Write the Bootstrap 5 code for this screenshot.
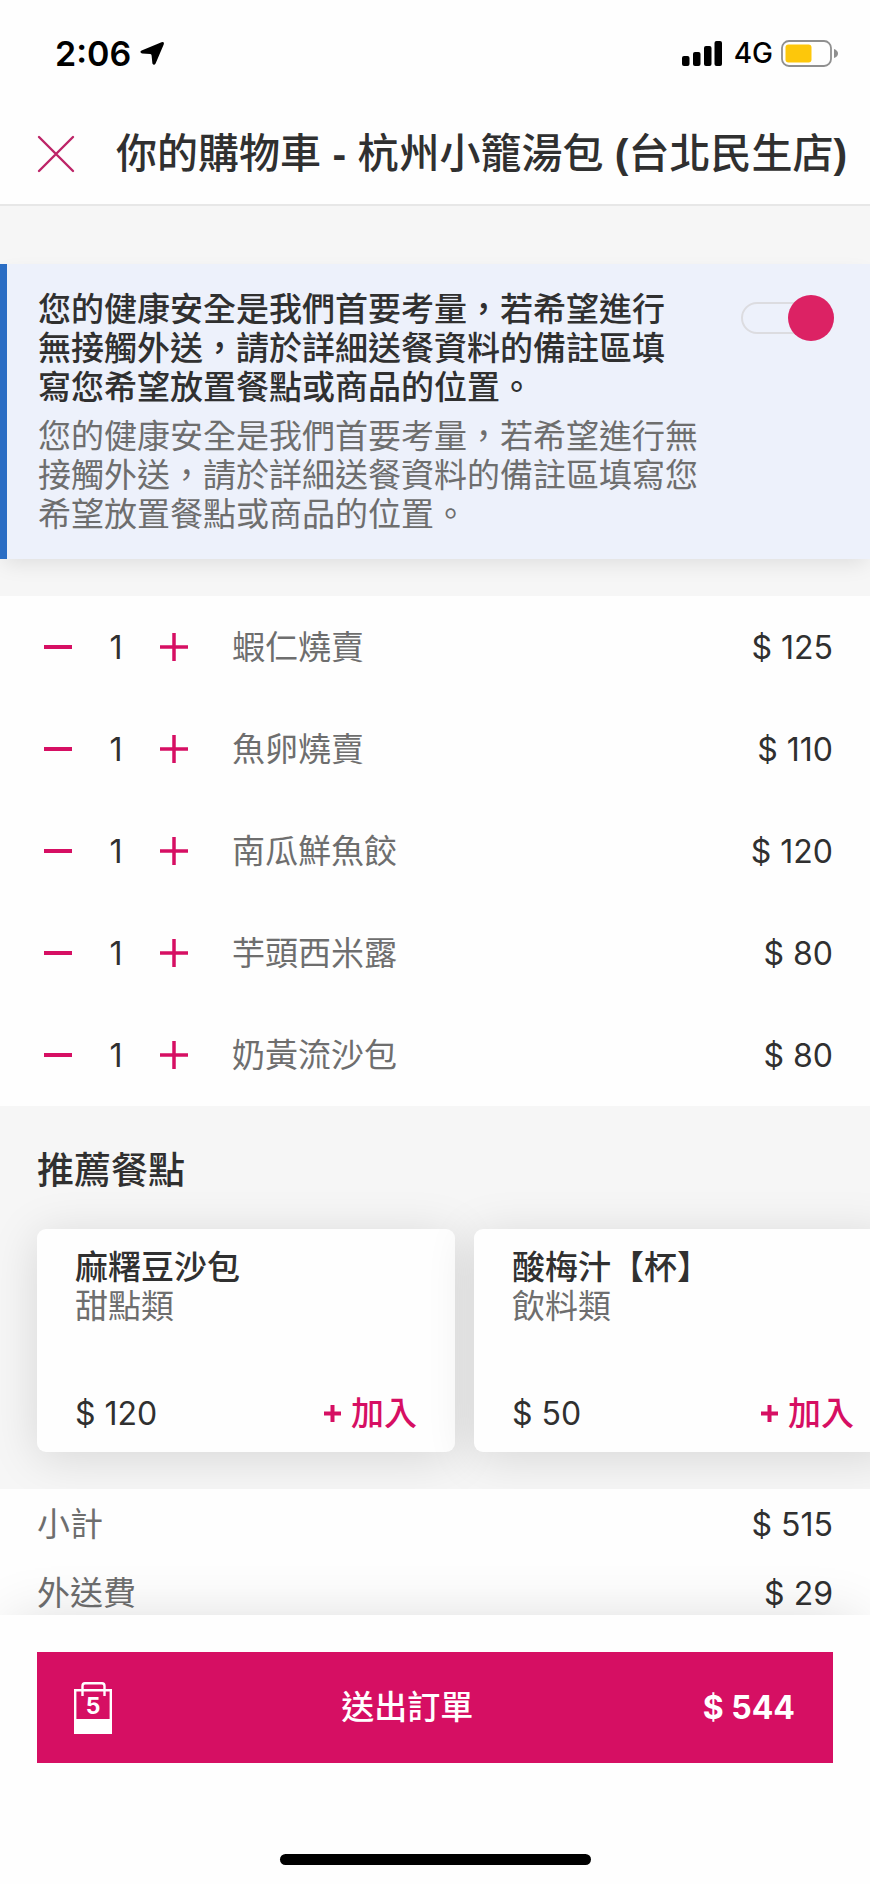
<!DOCTYPE html>
<html lang="zh-Hant">
<head>
<meta charset="utf-8">
<meta name="viewport" content="width=device-width, initial-scale=1">
<title>你的購物車</title>
<link href="https://cdn.jsdelivr.net/npm/bootstrap@5.3.0/dist/css/bootstrap.min.css" rel="stylesheet">
<style>
  :root { --pink: #d60f63; --ink: #303030; --soft: #6e6e6e; --paper: #fefefe; --edge: 37px; }
  body { font-family: Inter, "Noto Sans CJK TC", sans-serif; font-size: 33px; line-height: 39px; color: var(--ink); background: #f6f6f6; }
  .edge-x { padding-left: var(--edge); padding-right: var(--edge); }
  .paper { background: var(--paper); }
  .soft { color: var(--soft); }
  .amount { font-size: 32px; }
  .medium { font-weight: 500; }

  .status-bar { height: 107px; padding: 0 31px 0 55px; color: #000; }
  .clock { font-size: 34px; font-weight: 600; }
  .network { font-size: 28px; font-weight: 500; }
  .title-bar { height: 99px; padding-bottom: 4px; border-bottom: 2px solid #e7e7e7; }
  .title-bar h1 { font-size: 41px; line-height: 49px; }
  .title-bar b { font-family: "Liberation Sans", sans-serif; }
  .close-btn { margin-right: 41px; }

  .notice { margin: 58px 0 37px; padding: 26px 36px 25px 31px; background: #edf1fb; border-left: 7px solid #2a6dc4; box-shadow: 0 8px 20px -4px rgba(0,0,0,.1); }
  .notice label { max-width: 650px; margin-bottom: 10px; }
  .notice p { max-width: 680px; }
  .toggle { appearance: none; display: grid; align-items: center; flex: none; width: 93px; height: 46px; margin: 5px 0 0; }
  .toggle::before, .toggle::after { content: ""; grid-area: 1 / 1; }
  .toggle::before { height: 32px; border: 2px solid #dcdce0; border-radius: 16px; }
  .toggle::after { width: 46px; height: 46px; border-radius: 50%; background: #dc2264; }
  .toggle:checked::after { justify-self: end; }

  .cart-row { min-height: 102px; padding-left: 44px; }
  .count { width: 88px; text-align: center; }
  .step-btn { color: var(--pink); }
  .dish { margin-left: 44px; }

  .suggest { padding: 42px 0 37px; }
  .suggest h2 { font-size: 37px; line-height: 45px; margin-bottom: 36px; }
  .strip { gap: 19px; }
  .dish-card { flex: 0 0 418px; min-height: 223px; padding: 19px 38px; border-radius: 9px; background: var(--paper); box-shadow: 0 6px 48px rgba(0,0,0,.13); }
  .dish-card h3 { font-size: 33px; line-height: 39px; }
  .add-btn { color: var(--pink); font-size: 33px; line-height: 39px; font-weight: 500; }
  .add-btn svg { margin-right: 10px; }

  .totals { padding-top: 16px; padding-bottom: 2px; gap: 30px; }
  .checkout { padding-top: 37px; padding-bottom: 19px; z-index: 1; box-shadow: 0 -4px 56px -12px rgba(0,0,0,.16); }
  .order-btn { min-height: 111px; padding: 0 38px 0 37px; background: var(--pink); color: #fff; font-size: 33px; line-height: 39px; }
  .home-bar { width: 311px; height: 11px; border-radius: 6px; background: #000; margin-top: 91px; }
</style>
</head>
<body class="min-vh-100 d-flex flex-column">

<header class="paper">
  <div class="status-bar d-flex align-items-center">
    <span class="clock">2:06</span>
    <svg class="ms-2" width="26" height="26" viewBox="0 0 26 26" aria-hidden="true"><path d="M22.500 1.200Q25.600 .400 24.700 3.500L16.600 22.400Q15 25 13.400 22.400L12.600 14.400Q12.500 13.200 11.300 13L3 12.400Q0 11.300 2.600 9.600Z"/></svg>
    <div class="ms-auto d-flex align-items-center">
      <svg width="40" height="26" viewBox="0 0 40 26" aria-hidden="true"><rect y="15" width="7.500" height="10" rx="2"/><rect x="11" y="11" width="7.500" height="14" rx="2"/><rect x="22" y="5" width="7.500" height="20" rx="2"/><rect x="32.500" width="7.500" height="25" rx="2"/></svg>
      <span class="network ms-2 me-2 ps-1">4G</span>
      <svg width="58" height="27" viewBox="0 0 58 27" aria-hidden="true"><rect x="1" y="1" width="49" height="25" rx="7" fill="none" stroke="#8f8f8f" stroke-width="1.800"/><rect x="4.500" y="4.500" width="26" height="18" rx="3" fill="#fdc70b"/><path d="M53 9q4 1.500 4 4.500t-4 4.500z" fill="#8f8f8f"/></svg>
    </div>
  </div>
  <div class="title-bar edge-x pe-0 d-flex align-items-center">
    <button type="button" class="close-btn btn p-0 border-0 d-flex" aria-label="關閉">
      <svg width="38" height="38" viewBox="0 0 38 38" fill="none" stroke="#bd2467" stroke-width="2.400" stroke-linecap="round"><path d="M2 2 36 36M36 2 2 36"/></svg>
    </button>
    <h1 class="m-0 medium text-nowrap">你的購物車<b> - </b>杭州小籠湯包<b> (</b>台北民生店<b>)</b></h1>
  </div>
</header>

<main>
  <section class="notice d-flex justify-content-between align-items-start">
    <div>
      <label class="medium d-block" for="contactless">您的健康安全是我們首要考量，若希望進行無接觸外送，請於詳細送餐資料的備註區填寫您希望放置餐點或商品的位置。</label>
      <p class="soft m-0">您的健康安全是我們首要考量，若希望進行無接觸外送，請於詳細送餐資料的備註區填寫您希望放置餐點或商品的位置。</p>
    </div>
    <input class="toggle" type="checkbox" role="switch" id="contactless" checked>
  </section>

  <ul class="paper list-unstyled m-0">
    <li class="cart-row d-flex align-items-center">
      <button type="button" class="step-btn btn p-0 border-0 d-flex" aria-label="減少"><svg width="28" height="28" viewBox="0 0 28 28" stroke="currentColor" stroke-width="4"><path d="M0 14H28"/></svg></button>
      <span class="count amount">1</span>
      <button type="button" class="step-btn btn p-0 border-0 d-flex" aria-label="增加"><svg width="28" height="28" viewBox="0 0 28 28" stroke="currentColor" stroke-width="3.500"><path d="M0 14H28M14 0V28"/></svg></button>
      <span class="dish soft">蝦仁燒賣</span><span class="amount ms-auto edge-x">$ 125</span>
    </li>
    <li class="cart-row d-flex align-items-center">
      <button type="button" class="step-btn btn p-0 border-0 d-flex" aria-label="減少"><svg width="28" height="28" viewBox="0 0 28 28" stroke="currentColor" stroke-width="4"><path d="M0 14H28"/></svg></button>
      <span class="count amount">1</span>
      <button type="button" class="step-btn btn p-0 border-0 d-flex" aria-label="增加"><svg width="28" height="28" viewBox="0 0 28 28" stroke="currentColor" stroke-width="3.500"><path d="M0 14H28M14 0V28"/></svg></button>
      <span class="dish soft">魚卵燒賣</span><span class="amount ms-auto edge-x">$ 110</span>
    </li>
    <li class="cart-row d-flex align-items-center">
      <button type="button" class="step-btn btn p-0 border-0 d-flex" aria-label="減少"><svg width="28" height="28" viewBox="0 0 28 28" stroke="currentColor" stroke-width="4"><path d="M0 14H28"/></svg></button>
      <span class="count amount">1</span>
      <button type="button" class="step-btn btn p-0 border-0 d-flex" aria-label="增加"><svg width="28" height="28" viewBox="0 0 28 28" stroke="currentColor" stroke-width="3.500"><path d="M0 14H28M14 0V28"/></svg></button>
      <span class="dish soft">南瓜鮮魚餃</span><span class="amount ms-auto edge-x">$ 120</span>
    </li>
    <li class="cart-row d-flex align-items-center">
      <button type="button" class="step-btn btn p-0 border-0 d-flex" aria-label="減少"><svg width="28" height="28" viewBox="0 0 28 28" stroke="currentColor" stroke-width="4"><path d="M0 14H28"/></svg></button>
      <span class="count amount">1</span>
      <button type="button" class="step-btn btn p-0 border-0 d-flex" aria-label="增加"><svg width="28" height="28" viewBox="0 0 28 28" stroke="currentColor" stroke-width="3.500"><path d="M0 14H28M14 0V28"/></svg></button>
      <span class="dish soft">芋頭西米露</span><span class="amount ms-auto edge-x">$ 80</span>
    </li>
    <li class="cart-row d-flex align-items-center">
      <button type="button" class="step-btn btn p-0 border-0 d-flex" aria-label="減少"><svg width="28" height="28" viewBox="0 0 28 28" stroke="currentColor" stroke-width="4"><path d="M0 14H28"/></svg></button>
      <span class="count amount">1</span>
      <button type="button" class="step-btn btn p-0 border-0 d-flex" aria-label="增加"><svg width="28" height="28" viewBox="0 0 28 28" stroke="currentColor" stroke-width="3.500"><path d="M0 14H28M14 0V28"/></svg></button>
      <span class="dish soft">奶黃流沙包</span><span class="amount ms-auto edge-x">$ 80</span>
    </li>
  </ul>

  <section class="suggest overflow-hidden">
    <h2 class="edge-x medium">推薦餐點</h2>
    <div class="strip edge-x d-flex">
      <article class="dish-card d-flex flex-column">
        <h3 class="m-0 medium">麻糬豆沙包</h3>
        <span class="soft">甜點類</span>
        <div class="mt-auto d-flex justify-content-between align-items-center">
          <span class="amount">$ 120</span>
          <button type="button" class="add-btn btn p-0 border-0 d-flex align-items-center"><svg width="17" height="17" viewBox="0 0 17 17" stroke="currentColor" stroke-width="4" aria-hidden="true"><path d="M0 8.500H17M8.500 0V17"/></svg>加入</button>
        </div>
      </article>
      <article class="dish-card d-flex flex-column">
        <h3 class="m-0 medium">酸梅汁【杯】</h3>
        <span class="soft">飲料類</span>
        <div class="mt-auto d-flex justify-content-between align-items-center">
          <span class="amount">$ 50</span>
          <button type="button" class="add-btn btn p-0 border-0 d-flex align-items-center"><svg width="17" height="17" viewBox="0 0 17 17" stroke="currentColor" stroke-width="4" aria-hidden="true"><path d="M0 8.500H17M8.500 0V17"/></svg>加入</button>
        </div>
      </article>
    </div>
  </section>

  <section class="totals paper edge-x d-flex flex-column">
    <div class="d-flex justify-content-between"><span class="soft">小計</span><span class="amount">$ 515</span></div>
    <div class="d-flex justify-content-between"><span class="soft">外送費</span><span class="amount">$ 29</span></div>
  </section>
</main>

<footer class="checkout paper edge-x mt-auto position-relative">
  <button type="button" class="order-btn btn w-100 border-0 rounded-0 d-flex align-items-center justify-content-between">
    <svg width="38" height="52" viewBox="0 0 38 52" aria-label="5"><path d="M1.200 8.200H36.800V50.800H1.200ZM8.500 14V4Q8.500 1.200 11 1.200H28Q30.500 1.200 30.500 4V14" fill="none" stroke="#fff" stroke-width="2.400"/><path d="M1 37H37V51H1Z" fill="#fff"/><text x="19" y="31.500" text-anchor="middle" font-size="23" font-weight="700" fill="#fff">5</text></svg>
    <span class="medium">送出訂單</span>
    <span class="amount fw-bold">$ 544</span>
  </button>
  <div class="home-bar mx-auto"></div>
</footer>

<script src="https://cdn.jsdelivr.net/npm/bootstrap@5.3.0/dist/js/bootstrap.bundle.min.js"></script>
</body>
</html>
